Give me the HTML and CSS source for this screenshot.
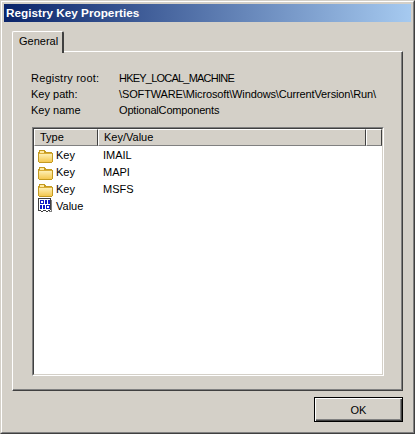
FILE: index.html
```html
<!DOCTYPE html>
<html lang="en">
<head>
  <meta charset="UTF-8" />
  <title>Registry Key Properties</title>
  <link rel="stylesheet" href="styles.css">
</head>
<body>
  <div class="window">
    <div class="window-inner">
      <div class="titlebar">Registry Key Properties</div>

      <div class="tabs">
        <div class="tab">General</div>
      </div>

      <!-- General tab -->
      <div class="panel">
        <div class="props">
          <span class="label-wide">Registry root:</span><span class="val-caps">HKEY_LOCAL_MACHINE</span>
          <span>Key path:</span><span class="val-path">\SOFTWARE\Microsoft\Windows\CurrentVersion\Run\</span>
          <span>Key name</span><span class="val-name">OptionalComponents</span>
        </div>

        <div class="list">
          <div class="list-inner">
            <div class="list-header">
              <div class="col-head col-type">Type</div>
              <div class="col-head col-key">Key/Value</div>
              <div class="col-head col-rest"></div>
            </div>
            <div class="row">
              <svg class="icon" viewBox="0 0 16 16"><use href="#folder"/></svg>
              <span class="row-type">Key</span><span>IMAIL</span>
            </div>
            <div class="row">
              <svg class="icon" viewBox="0 0 16 16"><use href="#folder"/></svg>
              <span class="row-type">Key</span><span>MAPI</span>
            </div>
            <div class="row">
              <svg class="icon" viewBox="0 0 16 16"><use href="#folder"/></svg>
              <span class="row-type">Key</span><span>MSFS</span>
            </div>
            <div class="row">
              <svg class="icon" viewBox="0 0 16 16" shape-rendering="crispEdges">
                <path d="M0 0h13v12h-1v1h-2v1h-2v-1h-3v1h-2v-1h-3z" fill="#404040"/>
                <path d="M1 1h11v11h-2v1h-2v-1h-3v1h-2v-1h-2z" fill="#fff"/>
                <path d="M13 2h1v11h-1zM11 13h3v1h-3z" fill="#808080"/>
                <path d="M2 2h4v4h-4zM7 2h2v4h-2zM10 2h2v4h-2zM2 7h2v4h-2zM5 7h2v4h-2zM8 7h4v4h-4z" fill="#1018c8"/>
                <path d="M3 3h2v2h-2zM9 8h2v2h-2z" fill="#fff"/>
              </svg>
              <span class="row-type">Value</span>
            </div>
          </div>
        </div>
      </div>

      <div class="footer">
        <button class="ok-btn" type="button">OK</button>
      </div>
    </div>
  </div>

  <!-- Shared folder icon -->
  <svg class="defs" width="0" height="0">
    <defs>
      <linearGradient id="folderFill" x1="0" y1="0" x2="0" y2="1">
        <stop offset="0" stop-color="#fff4c0"/>
        <stop offset="1" stop-color="#f4c850"/>
      </linearGradient>
      <g id="folder" shape-rendering="crispEdges" transform="translate(0 1)">
        <path d="M1 2h6v1h1v1h6v1h1v9h-1v1h-13v-1h-1v-10h1z" fill="#c49a20"/>
        <path d="M2 3h4v2h-4z" fill="#ffe9a0"/>
        <path d="M1 5h13v9h-13z" fill="url(#folderFill)"/>
        <path d="M1 5h13v1h-13z" fill="#d9ad38"/>
      </g>
    </defs>
  </svg>
</body>
</html>
```

FILE: styles.css
```css
* { box-sizing: border-box; margin: 0; padding: 0; }
html, body {
  height: 100%;
  font-family: 'Liberation Sans', Arial, sans-serif;
  font-size: 11px;
  color: #000;
  background: #d4d0c8;
}

/* WINDOW FRAME */
.window {
  width: 415px;
  height: 434px;
  border: 1px solid;
  border-color: #d4d0c8 #404040 #404040 #d4d0c8;
}

.window-inner {
  height: 100%;
  padding: 2px;
  border: 1px solid;
  border-color: #fff #808080 #808080 #fff;
}

.titlebar {
  height: 18px;
  padding-left: 2px;
  line-height: 17px;
  font-size: 11.75px;
  font-weight: bold;
  color: #fff;
  background: linear-gradient(to right, #0a246a, #a6caf0);
}

/* TABS */
.tabs {
  display: flex;
  height: 29px;
  padding: 9px 0 0 8px;
}

.tab {
  position: relative;
  width: 52px;
  height: 22px;
  padding: 2px 0 0 6px;
  line-height: 15px;
  background: #d4d0c8;
  border-top: 1px solid #fff;
  border-left: 1px solid #fff;
  border-right: 2px solid #404040;
  border-radius: 2px 2px 0 0;
}

.panel {
  width: 391px;
  height: 340px;
  margin-left: 8px;
  padding: 18px 18px 0 18px;
  border: 1px solid;
  border-color: #fff #404040 #404040 #fff;
  box-shadow: inset -1px -1px 0 #808080;
}

/* PROPERTIES */
.props {
  display: grid;
  grid-template-columns: 88px 1fr;
  grid-auto-rows: 16px;
  line-height: 16px;
  white-space: nowrap;
}

.label-wide { letter-spacing: 0.2px; }
.val-caps { letter-spacing: -0.78px; }
.val-path { letter-spacing: -0.13px; }
.val-name { letter-spacing: -0.17px; }

/* LIST VIEW */
.list {
  width: 352px;
  height: 249px;
  margin: 9px 0 0 1px;
  border: 1px solid;
  border-color: #808080 #fff #fff #808080;
}

.list-inner {
  height: 100%;
  background: #fff;
  border: 1px solid;
  border-color: #404040 #d4d0c8 #d4d0c8 #404040;
}

.list-header {
  display: flex;
  height: 17px;
  line-height: 15px;
}

.col-head {
  height: 17px;
  padding-left: 5px;
  background: #d4d0c8;
  border: 1px solid;
  border-color: #fff #404040 #808080 #fff;
}

.col-type { width: 64px; }
.col-key { width: 268px; }
.col-rest { flex: 1; }

.row {
  display: flex;
  align-items: center;
  height: 17px;
  padding-left: 4px;
}

.icon {
  width: 16px;
  height: 16px;
  flex-shrink: 0;
}

.row-type { width: 47px; margin-left: 2px; }

/* FOOTER */
.footer {
  display: flex;
  justify-content: flex-end;
  padding: 6px 8px 0 0;
}

.ok-btn {
  width: 89px;
  height: 25px;
  font: inherit;
  color: #000;
  background: #d4d0c8;
  border: 1px solid #000;
  box-shadow: inset 1px 1px 0 #fff, inset -1px -1px 0 #404040, inset -2px -2px 0 #808080;
}

.defs { position: absolute; }
```
